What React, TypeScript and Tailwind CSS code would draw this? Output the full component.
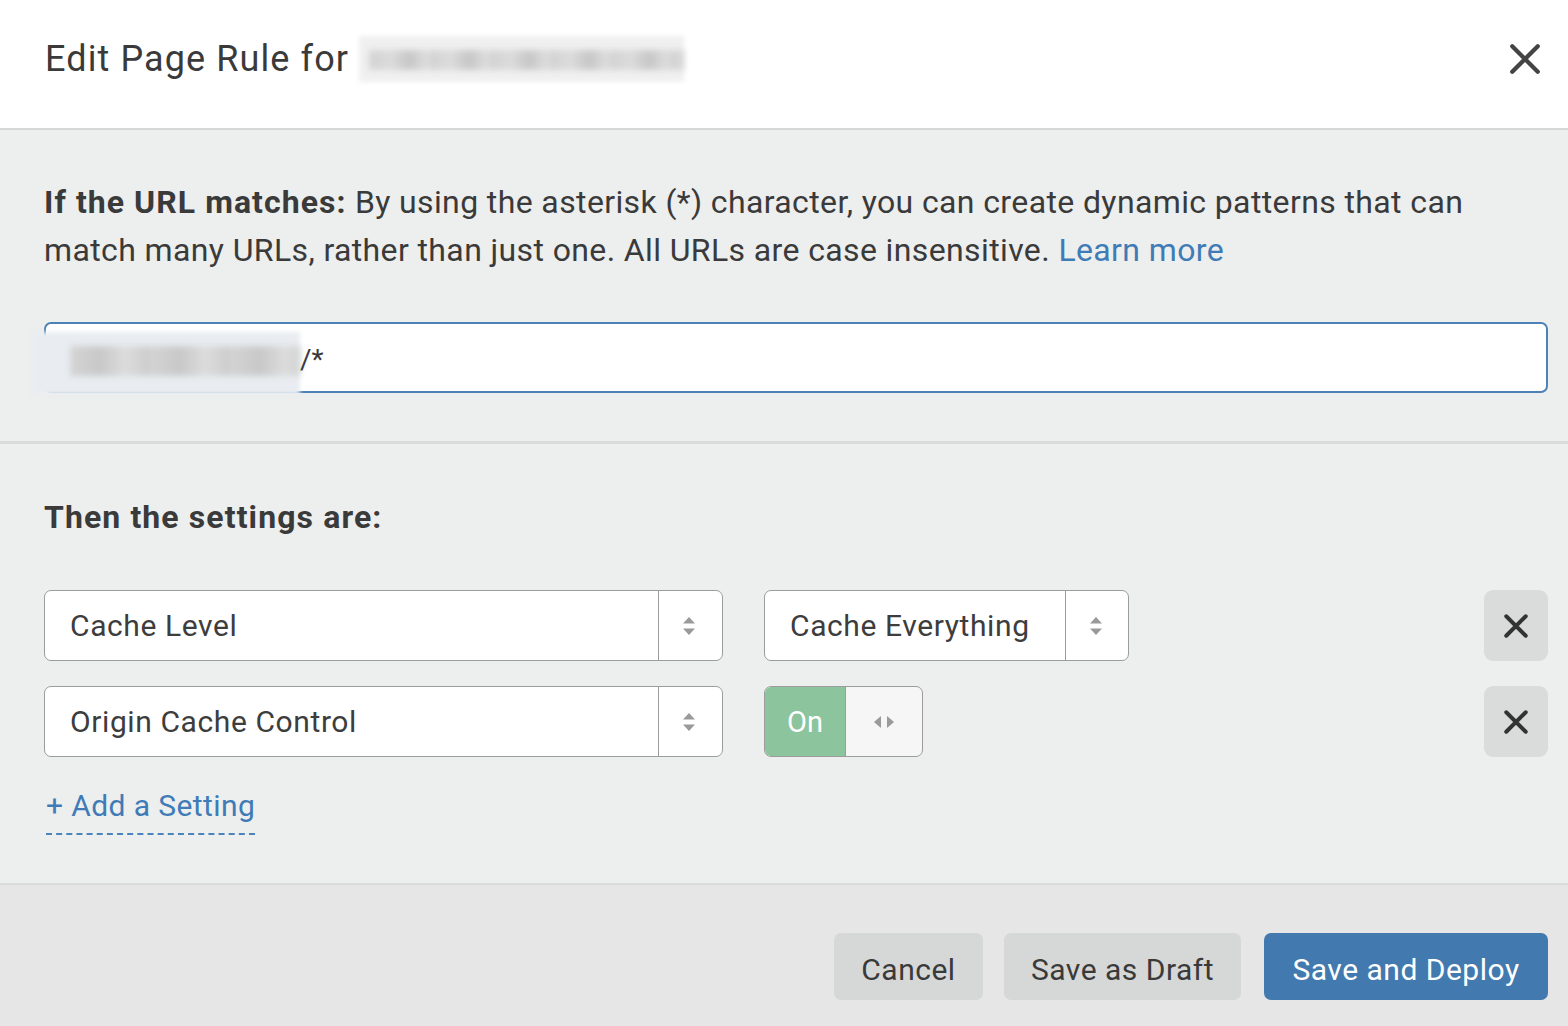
import * as React from 'react';

function UpDown() {
  return (
    <svg width="16" height="24" viewBox="0 0 16 24" fill="#9a9a9a">
      <path d="M8 3 L14 9.5 L2 9.5 Z" />
      <path d="M8 21 L14 14.5 L2 14.5 Z" />
    </svg>
  );
}

function Cross({ size, stroke }: { size: number; stroke: number }) {
  return (
    <svg width={size} height={size} viewBox="0 0 24 24" fill="none" stroke="currentColor" strokeWidth={stroke} strokeLinecap="round">
      <path d="M3 3 L21 21 M21 3 L3 21" />
    </svg>
  );
}

function Select({ label, width, divider }: { label: string; width: string; divider: string }) {
  return (
    <div className={`flex h-[71px] ${width} rounded-[7px] border-[1.5px] border-[#9c9c9c] bg-white`}>
      <div className={`flex ${divider} items-center border-r-[1.5px] border-[#9c9c9c] pl-[25px] text-[30px] tracking-[0.6px] text-[#3d3d3d]`}>
        {label}
      </div>
      <div className="flex flex-1 items-center justify-center pr-[3px]">
        <UpDown />
      </div>
    </div>
  );
}

function RemoveButton() {
  return (
    <button className="ml-auto flex h-[71px] w-[64px] items-center justify-center rounded-[9px] bg-[#dadbdb] text-[#333]">
      <Cross size={26} stroke={3.6} />
    </button>
  );
}

export default function App() {
  return (
    <div className="h-[1026px] w-[1568px] overflow-hidden bg-white font-['Roboto',sans-serif] text-[#3b3b3b]">
      {/* Header */}
      <div className="flex h-[130px] items-center border-b-2 border-[#d6d7d7] pb-[11px] pl-[45px] pr-[26px]">
        <h1 className="flex items-center text-[36px] font-normal tracking-[1.1px] text-[#3a3a3a]">
          Edit Page Rule for
          <span className="relative ml-[10px] inline-block h-[46px] w-[325px]">
            <span className="absolute inset-0 bg-[#f0f0f0] blur-[2px]" />
            <span className="absolute left-[10px] right-0 top-[14px] h-[20px] bg-[repeating-linear-gradient(90deg,#d2d2d2_0px,#dcdcdc_22px,#c6c6c6_40px,#e0e0e0_60px)] blur-[3px]" />
          </span>
        </h1>
        <button className="ml-auto text-[#444]">
          <Cross size={34} stroke={3} />
        </button>
      </div>

      {/* URL section */}
      <div className="border-b-[3px] border-[#d9dada] bg-[#edeeee] pb-[48px] pl-[44px] pr-[20px] pt-[48px]">
        <p className="text-[32px] leading-[48px] tracking-[0.38px] text-[#3a3a3a]">
          <span className="font-bold tracking-[1.05px]">If the URL matches:</span> By using the asterisk (*) character, you can create dynamic patterns that can match many URLs, rather than just one. All URLs are case insensitive.{' '}
          <a className="text-[#3f7bb6]">Learn more</a>
        </p>
        <div className="relative mt-[48px] flex h-[71px] items-center rounded-[7px] border-2 border-[#4c82b8] bg-white pl-[254px] text-[28px] text-[#3a3a3a]">
          <span className="absolute -left-[14px] top-[8px] h-[63px] w-[268px] bg-[#e9edf1] blur-[2px]" />
          <span className="absolute left-[24px] top-[22px] h-[30px] w-[230px] bg-[repeating-linear-gradient(90deg,#d4d4d4_0px,#c8c8c8_30px,#dcdcdc_55px,#cccccc_80px)] blur-[3px]" />
          <span className="relative pt-[4px]">/*</span>
        </div>
      </div>

      {/* Settings section */}
      <div className="h-[441px] border-b-2 border-[#d9dada] bg-[#edeeee] pl-[44px] pr-[20px] pt-[49px]">
        <h2 className="text-[32px] font-bold leading-[48px] tracking-[1.1px] text-[#3a3a3a]">Then the settings are:</h2>
        <div className="mt-[49px] flex flex-col gap-[25px]">
          <div className="flex items-center gap-[41px]">
            <Select label="Cache Level" width="w-[679px]" divider="w-[614px]" />
            <Select label="Cache Everything" width="w-[365px]" divider="w-[301px]" />
            <RemoveButton />
          </div>
          <div className="flex items-center gap-[41px]">
            <Select label="Origin Cache Control" width="w-[679px]" divider="w-[614px]" />
            <div className="flex h-[71px] w-[159px] overflow-hidden rounded-[7px] border-[1.5px] border-[#9c9c9c] bg-[#f6f6f6]">
              <div className="flex w-[81px] items-center justify-center border-r-[1.5px] border-[#9c9c9c] bg-[#8cc49d] pt-[3px] text-[29px] text-white">
                On
              </div>
              <div className="flex flex-1 items-center justify-center">
                <svg width="26" height="16" viewBox="0 0 26 16" fill="#9a9a9a">
                  <path d="M3 8 L10 2 L10 14 Z" />
                  <path d="M23 8 L16 2 L16 14 Z" />
                </svg>
              </div>
            </div>
            <RemoveButton />
          </div>
        </div>
        <a className="ml-[2px] mt-[31px] inline-block border-b-2 border-dashed border-[#4a84bd] pb-[9px] text-[30px] leading-[36px] tracking-[0.4px] text-[#3f7bb6]">
          + Add a Setting
        </a>
      </div>

      {/* Footer */}
      <div className="flex h-[142px] items-start justify-end gap-[21px] bg-[#e6e6e6] pr-[20px] pt-[48px]">
        <button className="h-[67px] w-[149px] rounded-[7px] bg-[#d6d7d7] pt-[6px] text-[30px] tracking-[0.5px] text-[#3a3a3a]">Cancel</button>
        <button className="h-[67px] w-[237px] rounded-[7px] bg-[#d6d7d7] pt-[6px] text-[30px] tracking-[0.5px] text-[#3a3a3a]">Save as Draft</button>
        <button className="ml-[2px] h-[67px] w-[284px] rounded-[7px] bg-[#4279ae] pt-[6px] text-[30px] tracking-[0.5px] text-white">Save and Deploy</button>
      </div>
    </div>
  );
}
